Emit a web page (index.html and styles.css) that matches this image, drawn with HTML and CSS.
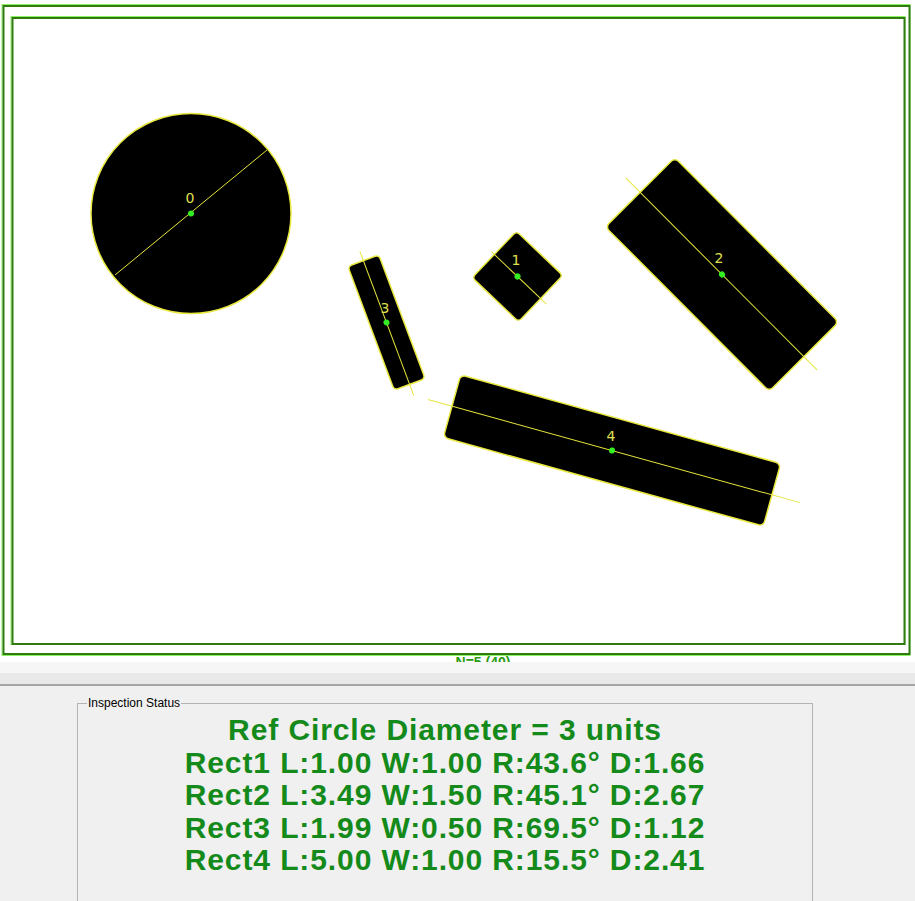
FILE: index.html
```html
<!DOCTYPE html>
<html>
<head>
<meta charset="utf-8">
<link rel="stylesheet" href="styles.css">
</head>
<body>
<div class="canvas">
<svg class="view" width="915" height="662" viewBox="0 0 915 662" xmlns="http://www.w3.org/2000/svg">
  <rect x="2" y="4.5" width="908" height="651" fill="none" stroke="#8cf060" stroke-width="1"/>
  <rect x="3.5" y="6" width="906" height="648" fill="none" stroke="#2f7a12" stroke-width="2"/>
  <rect x="11" y="16.5" width="894" height="628" fill="none" stroke="#8cf060" stroke-width="1"/>
  <rect x="12.5" y="18" width="892" height="626" fill="none" stroke="#2f7a12" stroke-width="2"/>

  <g class="shape">
    <circle cx="191" cy="213.5" r="100" fill="#000" stroke="#e8e840" stroke-width="1.5"/>
    <line x1="115" y1="275" x2="267" y2="150" class="axis"/>
    <circle cx="191" cy="213.5" r="3" class="dot"/>
    <text x="190" y="203" class="lbl">0</text>
  </g>

  <g transform="translate(517.5 276.5) rotate(43.6)">
    <rect x="-32" y="-32" width="64" height="64" rx="4" fill="#000" stroke="#e8e840" stroke-width="1.5"/>
    <line x1="-36" y1="0" x2="40" y2="0" class="axis"/>
    <circle cx="0" cy="0" r="3" class="dot"/>
  </g>
  <text x="516" y="265" class="lbl">1</text>

  <g transform="translate(722 274.5) rotate(45.1)">
    <rect x="-116" y="-49" width="232" height="98" rx="5" fill="#000" stroke="#e8e840" stroke-width="1.5"/>
    <line x1="-136" y1="0" x2="135" y2="0" class="axis"/>
    <circle cx="0" cy="0" r="3" class="dot"/>
  </g>
  <text x="719" y="263" class="lbl">2</text>

  <g transform="translate(386.5 322.5) rotate(69.5)">
    <rect x="-66" y="-16.5" width="132" height="33" rx="4" fill="#000" stroke="#e8e840" stroke-width="1.5"/>
    <line x1="-76" y1="0" x2="78" y2="0" class="axis"/>
    <circle cx="0" cy="0" r="3" class="dot"/>
  </g>
  <text x="385" y="313" class="lbl">3</text>

  <g transform="translate(612 450.5) rotate(15.5)">
    <rect x="-166" y="-32.5" width="332" height="65" rx="5" fill="#000" stroke="#e8e840" stroke-width="1.5"/>
    <line x1="-191" y1="0" x2="195" y2="0" class="axis"/>
    <circle cx="0" cy="0" r="3" class="dot"/>
  </g>
  <text x="611" y="441" class="lbl">4</text>

  <text x="483" y="667" class="cap">N=5 (40)</text>
</svg>
</div>
<div class="strip"></div>
<div class="panel">
  <fieldset class="group">
    <legend class="legend">Inspection Status</legend>
    <div class="lines">
      <div class="line">Ref Circle Diameter = 3 units</div>
      <div class="line">Rect1 L:1.00 W:1.00 R:43.6° D:1.66</div>
      <div class="line">Rect2 L:3.49 W:1.50 R:45.1° D:2.67</div>
      <div class="line">Rect3 L:1.99 W:0.50 R:69.5° D:1.12</div>
      <div class="line">Rect4 L:5.00 W:1.00 R:15.5° D:2.41</div>
    </div>
  </fieldset>
</div>
</body>
</html>
```
FILE: styles.css
```css
html, body {
  margin: 0;
  padding: 0;
  background: #f0f0f0;
  overflow: hidden;
}
body {
  width: 915px;
  height: 901px;
  font-family: "Liberation Sans", Arial, sans-serif;
}
.canvas {
  height: 662px;
  background: #fff;
  overflow: hidden;
}
.view {
  display: block;
}
.axis {
  stroke: #e6e63c;
  stroke-width: 1;
}
.dot {
  fill: #33ee22;
}
.lbl {
  fill: #e0e050;
  font-family: "DejaVu Sans", sans-serif;
  font-size: 14px;
  text-anchor: middle;
}
.cap {
  fill: #2a9a10;
  font-family: "Liberation Sans", sans-serif;
  font-weight: bold;
  font-size: 14px;
  text-anchor: middle;
}
.strip {
  height: 22px;
  background: linear-gradient(#f6f6f6 0, #f6f6f6 11px, #e9e9e9 11px, #e9e9e9 100%);
  border-bottom: 2px solid #a4a4a4;
}
.panel {
  height: 215px;
  padding: 10px 0 0 77px;
  box-sizing: border-box;
}
.group {
  margin: 0;
  width: 736px;
  height: 240px;
  box-sizing: border-box;
  border: 1px solid #b4b4b4;
  padding: 4px 0 0 0;
}
.legend {
  font-size: 12px;
  line-height: 14px;
  color: #000;
  padding: 0 1px;
  margin-left: 9px;
}
.lines {
  display: flex;
  flex-direction: column;
  align-items: center;
}
.line {
  color: #138a1a;
  font-weight: bold;
  font-size: 30px;
  letter-spacing: 0.9px;
  line-height: 32.5px;
  white-space: nowrap;
}
```
